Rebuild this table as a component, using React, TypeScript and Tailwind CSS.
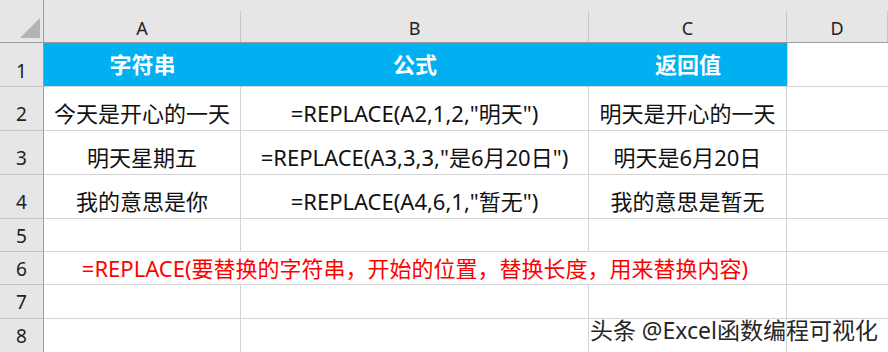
const font = { fontFamily: '"Noto Sans", "Noto Sans CJK SC", sans-serif' }

const rows: { a: string; b: string; c: string }[] = [
  { a: '今天是开心的一天', b: '=REPLACE(A2,1,2,"明天")', c: '明天是开心的一天' },
  { a: '明天星期五', b: '=REPLACE(A3,3,3,"是6月20日")', c: '明天是6月20日' },
  { a: '我的意思是你', b: '=REPLACE(A4,6,1,"暂无")', c: '我的意思是暂无' },
]

const cell = 'flex items-center justify-center border-r border-b border-[#d4d4d4] text-[22px] text-[#111] whitespace-nowrap'
const rowHead = 'flex items-center justify-center border-r border-b border-r-[#9c9c9c] border-b-[#c6c6c6] bg-[#e6e6e6] text-[19px] text-[#222]'

export default function App() {
  return (
    <div className="relative h-[352px] w-[888px] overflow-hidden bg-white" style={font}>
      <div className="grid grid-cols-[44px_197px_348px_198px_1fr]">
        {/* column header */}
        <div className="relative h-[43px] border-r border-b border-[#9c9c9c] bg-[#e6e6e6]">
          <div className="absolute left-[20px] top-[18px] h-[20px] w-[20px] bg-[#b3b3b3] [clip-path:polygon(100%_0,100%_100%,0_100%)]" />
        </div>
        {['A', 'B', 'C', 'D'].map((l) => (
          <div key={l} className="flex h-[43px] flex-col border-b border-[#9c9c9c] bg-[#e6e6e6]">
            <div className="h-[15px]" />
            <div className="flex flex-1 items-center justify-center border-r border-[#c6c6c6] pt-[4px] text-[18px] text-[#222]">
              {l}
            </div>
          </div>
        ))}

        {/* row 1 */}
        <div className={`${rowHead} h-[44px] pt-[14px]`}>1</div>
        <div className="col-span-3 grid h-[44px] grid-cols-[197px_348px_198px] border-b border-[#d4d4d4] bg-[#00b0f0] text-[22px] font-bold text-white">
          <div className="flex items-center justify-center">字符串</div>
          <div className="flex items-center justify-center">公式</div>
          <div className="flex items-center justify-center">返回值</div>
        </div>
        <div className="h-[44px] border-b border-l border-[#d4d4d4]" />

        {rows.map((r, i) => (
          <div key={i} className="contents">
            <div className={`${rowHead} h-[44px] pt-[12px]`}>{i + 2}</div>
            <div className={`${cell} h-[44px] pt-[10px]`}>{r.a}</div>
            <div className={`${cell} h-[44px] pt-[10px]`}>{r.b}</div>
            <div className={`${cell} h-[44px] pt-[10px]`}>{r.c}</div>
            <div className={`${cell} h-[44px] border-r-0`} />
          </div>
        ))}

        <div className={`${rowHead} h-[33px] pt-[2px]`}>5</div>
        <div className={`${cell} h-[33px]`} />
        <div className={`${cell} h-[33px]`} />
        <div className={`${cell} h-[33px]`} />
        <div className={`${cell} h-[33px] border-r-0`} />

        <div className={`${rowHead} h-[33px] pt-[2px]`}>6</div>
        <div className="col-span-3 flex h-[33px] items-center justify-center overflow-visible whitespace-nowrap border-r border-b border-[#d4d4d4] text-[22px] text-[#ff0000]">
          =REPLACE(要替换的字符串，开始的位置，替换长度，用来替换内容)
        </div>
        <div className={`${cell} h-[33px] border-r-0`} />

        {[7, 8].map((n) => (
          <div key={n} className="contents">
            <div className={`${rowHead} h-[34px] pt-[2px]`}>{n}</div>
            <div className={`${cell} h-[34px]`} />
            <div className={`${cell} h-[34px]`} />
            <div className={`${cell} h-[34px]`} />
            <div className={`${cell} h-[34px] border-r-0`} />
          </div>
        ))}
      </div>

      {/* watermark */}
      <div className="absolute right-[10px] top-[313px] text-[23px] text-[#262626] [text-shadow:0_0_2px_#fff,0_0_2px_#fff]">
        头条 @Excel函数编程可视化
      </div>
    </div>
  )
}
